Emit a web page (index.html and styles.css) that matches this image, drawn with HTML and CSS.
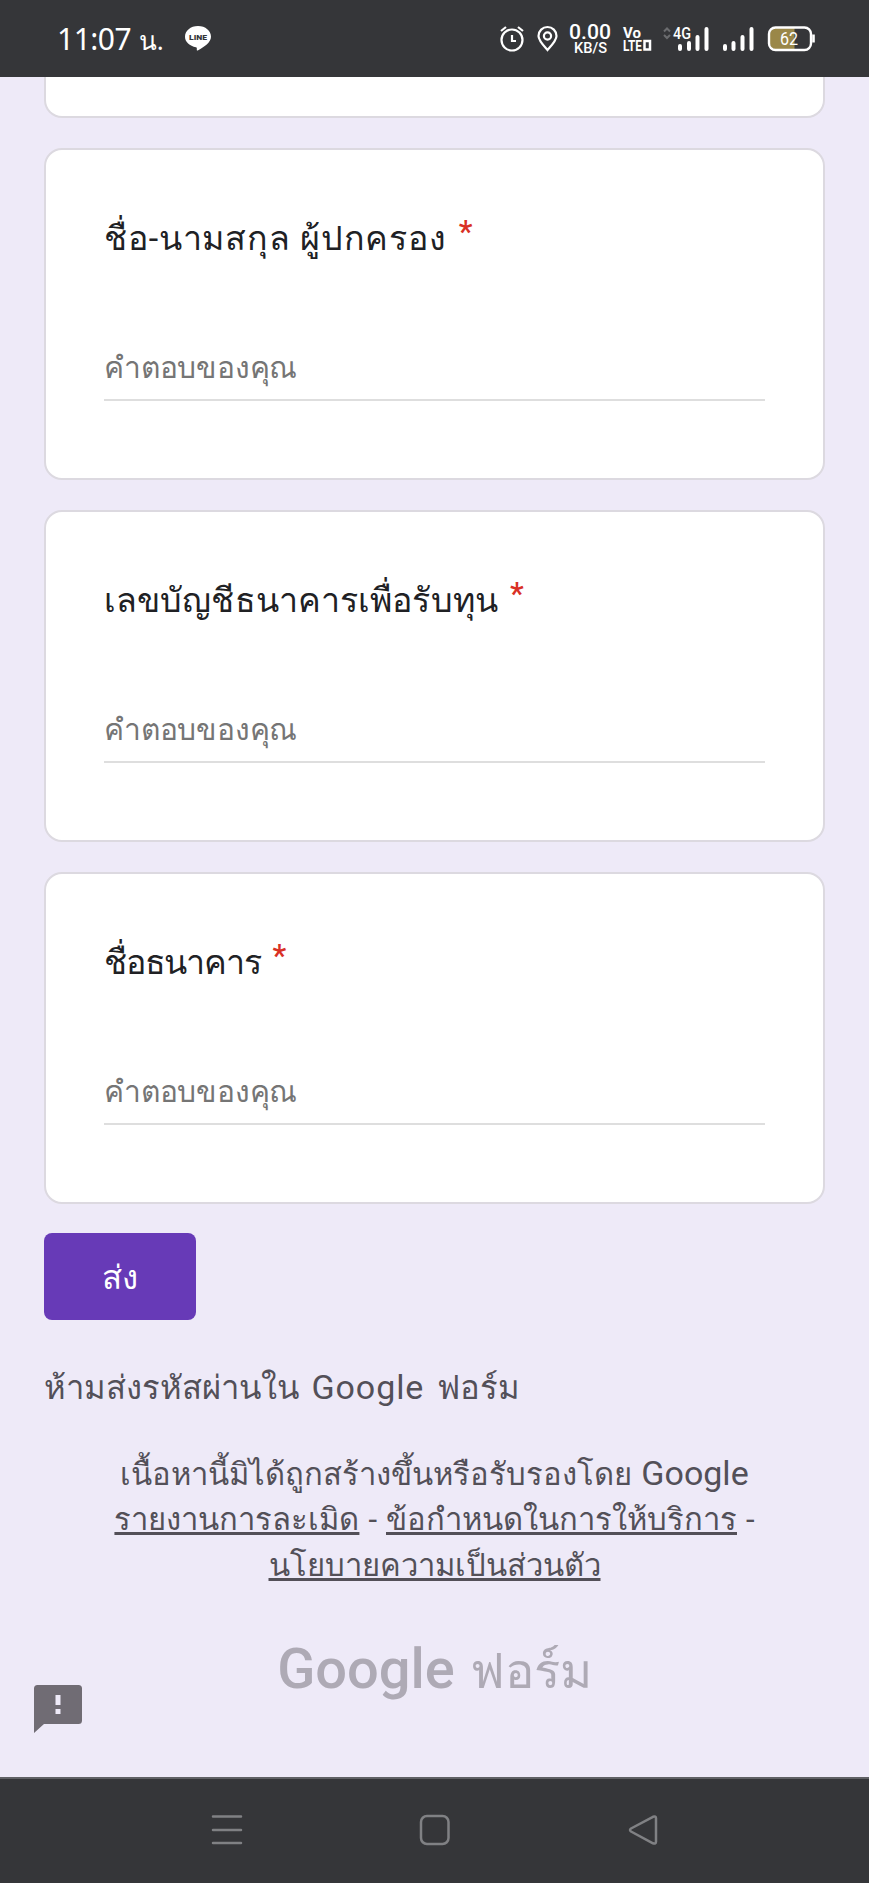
FILE: index.html
```html
<!DOCTYPE html>
<html lang="th">
<head>
<meta charset="utf-8">
<title>Google ฟอร์ม</title>
<link rel="stylesheet" href="styles.css">
</head>
<body>
<div class="screen">
  <header class="status">
    <div class="status-left">
      <div class="clock"><span>11:07</span><span class="clock-unit">น.</span></div>
      <svg class="line-icon" width="28" height="28" viewBox="0 0 28 28"><path d="M14 1C6.500 1 1 5.800 1 11.800c0 5.300 4.700 9.400 11 10.400.9.200.9.900.8 2.100-.1 1.200.2 1.700 1.400 1C20 22 27 17.500 27 11.800 27 5.800 21.500 1 14 1z" fill="#fff"/><text x="14" y="15" text-anchor="middle" class="line-word" textLength="18" lengthAdjust="spacingAndGlyphs">LINE</text></svg>
    </div>
    <svg class="status-right" width="320" height="36" viewBox="496 20 320 36" fill="none" stroke="#fff">
      <circle cx="511" cy="40" r="10.500" stroke-width="2.200"/><path d="M511 35v6h4M500 31l5-4M522 31l-5-4" stroke-width="2.200"/>
      <path d="M546.500 50c-4-4.500-9-9.500-9-14a9 9 0 0 1 18 0c0 4.500-5 9.500-9 14z" stroke-width="2.200"/><circle cx="546.500" cy="36" r="3.600" stroke-width="2.200"/>
      <g class="stat-text">
        <text x="568" y="38.500" font-size="20" textLength="42" lengthAdjust="spacingAndGlyphs">0.00</text>
        <text x="573" y="52.500" font-size="15" textLength="33" lengthAdjust="spacingAndGlyphs">KB/S</text>
        <text x="622" y="38" font-size="15" font-weight="700" textLength="18" lengthAdjust="spacingAndGlyphs">Vo</text>
        <text x="622" y="50.500" font-size="15.500" font-weight="700" textLength="19" lengthAdjust="spacingAndGlyphs">LTE</text>
        <text x="672" y="38.500" font-size="16" textLength="18" lengthAdjust="spacingAndGlyphs">4G</text>
      </g>
      <rect x="643.500" y="41" width="5.500" height="8.500" stroke-width="2.500"/>
      <path d="M663 31.500l3-3 3 3M663 35l3 3 3-3" stroke="#6b6c6f" stroke-width="2"/>
      <g stroke-width="4" stroke-linecap="round"><path d="M679 46v3M688 43v6M696.500 37v12M705.500 29v20M724 46v3M732.500 43v6M741.500 37v12M750.500 29v20"/></g>
      <path d="M775 28h18.500v21.500H775a6 6 0 0 1-6-6V34a6 6 0 0 1 6-6z" fill="#9a8748" stroke="none"/>
      <rect x="768" y="27.500" width="42" height="22.500" rx="6.500" stroke-width="2.400"/><path d="M812.500 34.500v8" stroke-width="2.600"/>
      <text class="stat-text battery" x="779" y="45" font-size="18" textLength="18" lengthAdjust="spacingAndGlyphs">62</text>
    </svg>
  </header>
  <main class="form">
    <section class="card card-cut"></section>
    <section class="card">
      <h2 class="question"><span class="q-name">ชื่อ-นามสกุล ผู้ปกครอง</span><span class="req">*</span></h2>
      <div class="answer">คำตอบของคุณ</div>
    </section>
    <section class="card">
      <h2 class="question"><span class="q-account">เลขบัญชีธนาคารเพื่อรับทุน</span><span class="req">*</span></h2>
      <div class="answer">คำตอบของคุณ</div>
    </section>
    <section class="card">
      <h2 class="question"><span class="q-bank">ชื่อธนาคาร</span><span class="req">*</span></h2>
      <div class="answer">คำตอบของคุณ</div>
    </section>
    <button class="submit">ส่ง</button>
    <p class="warn"><span>ห้ามส่งรหัสผ่านใน</span><span class="latin">Google</span><span>ฟอร์ม</span></p>
    <div class="legal">
      <div class="legal-row"><span>เนื้อหานี้มิได้ถูกสร้างขึ้นหรือรับรองโดย</span><span class="latin-tight">Google</span></div>
      <div class="legal-row"><a>รายงานการละเมิด</a><span>-</span><a>ข้อกำหนดในการให้บริการ</a><span>-</span></div>
      <div class="legal-row"><a>นโยบายความเป็นส่วนตัว</a></div>
    </div>
    <div class="brand"><span class="brand-name">Google</span><span class="brand-forms">ฟอร์ม</span></div>
    <svg class="feedback" width="48" height="48" viewBox="0 0 48 48"><path d="M3.500 0h41A3.500 3.500 0 0 1 48 3.500v32a3.500 3.500 0 0 1-3.500 3.500H10L0 48V3.500A3.500 3.500 0 0 1 3.500 0zM21.500 10v10h5V10zM21.500 24v5h5v-5z" fill="#706c74" fill-rule="evenodd"/></svg>
  </main>
  <nav class="nav">
    <svg width="32" height="32" viewBox="0 0 32 32"><path d="M2 2.500h28M2 16h28M2 29h28"/></svg>
    <svg width="32" height="32" viewBox="0 0 32 32"><rect x="2" y="2" width="27.500" height="28" rx="6"/></svg>
    <svg width="32" height="32" viewBox="0 0 32 32"><path d="M4 14.500 26 2.800q3-1 3 1.500v23.500q0 2.500-3 1.500L4 17.500q-2-1.500 0-3z"/></svg>
  </nav>
</div>
</body>
</html>
```
FILE: styles.css
```css
* { box-sizing: border-box; }
body { margin: 0; font-family: Roboto, "Noto Sans", sans-serif; }
.screen { width: 869px; height: 1883px; display: flex; flex-direction: column; background: #eeeaf8; overflow: hidden; }
.status { height: 77px; flex: none; background: #353639; color: #fff; display: flex; justify-content: space-between; padding: 0 52px 0 57px; }
.status-left { display: flex; }
.clock { width: 127px; display: flex; align-items: baseline; gap: 8px; font: 30px/77px "Noto Sans", sans-serif; letter-spacing: -.5px; white-space: nowrap; }
.clock-unit { font-size: 26px; }
.line-icon { margin-top: 25px; }
.line-word { font: 900 8px Roboto, sans-serif; fill: #353639; }
.status-right { margin-top: 20px; }
.stat-text { font-family: Roboto, sans-serif; font-weight: 500; fill: #fff; stroke: none; }
.battery { font-weight: 400; }
.form { flex: none; height: 1700px; padding: 0 44px; display: flex; flex-direction: column; }
.card { height: 332px; flex: none; margin-bottom: 30px; background: #fff; border: 2px solid #dcd9e0; border-radius: 18px; padding: 62px 58px 0; }
.card-cut { height: 41px; border-top: 0; border-radius: 0 0 18px 18px; padding: 0; }
.question { margin: 0; height: 60px; font-weight: 400; font-size: 34px; line-height: 52px; color: #202124; white-space: nowrap; display: flex; gap: 12px; }
.q-name { letter-spacing: .82px; }
.q-account { letter-spacing: .1px; }
.q-bank { letter-spacing: -1.200px; }
.req { color: #d93025; font-weight: 500; font-size: 31px; line-height: 40px; }
.answer { margin-top: 64px; height: 65px; border-bottom: 2px solid #dedede; font-size: 30px; line-height: 64px; letter-spacing: -.2px; color: #757575; white-space: nowrap; }
.submit { flex: none; width: 152px; height: 87px; border: 0; border-radius: 8px; background: #673ab7; color: #fff; margin: -1px 0 0; font: 33px/89px Roboto, sans-serif; padding: 0; }
.warn { margin: 47px 0 0; display: flex; align-items: baseline; gap: 12.500px; font-size: 32.800px; line-height: 40px; color: #535058; white-space: nowrap; }
.latin { font-size: 34px; letter-spacing: .9px; }
.latin-tight { font-size: 34px; }
.legal { margin-top: 42px; font-size: 31px; line-height: 46.500px; color: #535058; white-space: nowrap; }
.legal-row { height: 46.500px; display: flex; justify-content: center; align-items: baseline; gap: 9px; }
.legal a { text-decoration: underline; text-decoration-thickness: 3px; text-underline-offset: 2px; }
.brand { margin-top: 42px; height: 74px; display: flex; justify-content: center; align-items: baseline; gap: 15px; color: #aeaab5; line-height: 74px; white-space: nowrap; }
.brand-name { font-weight: 500; font-size: 56px; }
.brand-forms { font-size: 49px; }
.feedback { margin: -21px 0 0 -10px; }
.nav { flex: none; height: 106px; background: #353639; border-top: 2px solid #606165; display: flex; gap: 176px; padding: 35px 0 0 211px; }
.nav svg { fill: none; stroke: #808184; stroke-width: 2.500; stroke-linecap: round; stroke-linejoin: round; }
```
